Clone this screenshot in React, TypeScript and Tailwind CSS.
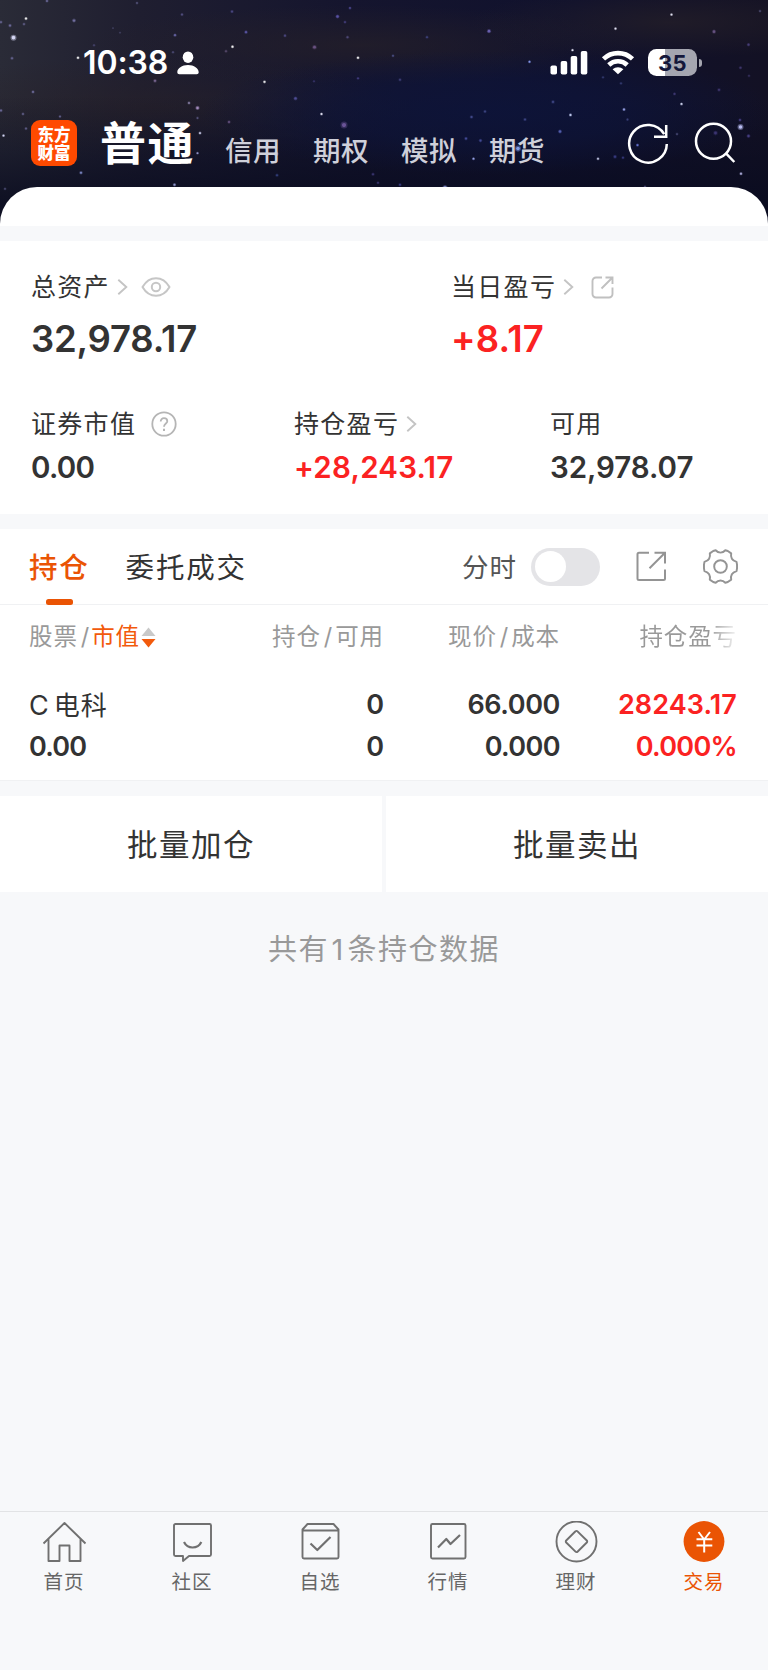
import React from "react";

const FONT = "font-['Inter','Noto_Sans_CJK_SC',sans-serif]";

// x, y, radius, opacity, colour
const STARS: [number, number, number, number, string][] = [
  [13.5, 37.5, 3, 1, "#dfe0ff"], [26, 18.5, 1.6, 1, "#fff"], [10, 25.5, 1.8, 0.6, "#8f8ccc"], [24, 24, 1.6, 0.5, "#8f8ccc"],
  [1, 22, 1.6, 0.6, "#8f8ccc"], [47, 1, 1.6, 0.6, "#8f8ccc"], [74, 20.5, 2, 0.7, "#8c88c4"], [12, 58, 1.8, 0.5, "#8f8ccc"],
  [78, 57.5, 1.6, 1, "#fff"], [33, 91.5, 1.7, 0.6, "#8f8ccc"], [23, 113.5, 1.6, 0.5, "#8f8ccc"], [1, 110, 1.7, 0.6, "#8f8ccc"],
  [3.5, 135, 1.5, 1, "#dfe0ff"], [26, 128, 1.6, 0.5, "#8f8ccc"], [81, 172, 1.8, 0.8, "#8f9be0"], [60, 116, 1.4, 0.6, "#8f8ccc"],
  [5, 188, 1.5, 0.4, "#8f8ccc"], [137, 3, 1.5, 0.4, "#8f8ccc"], [182, 14.5, 1.6, 0.6, "#6f6cac"], [175, 35, 1.7, 0.7, "#7f7ccc"],
  [113, 28, 1.2, 0.3, "#8f8ccc"], [120, 32.5, 1.2, 0.3, "#8f8ccc"], [94, 45, 1.5, 0.4, "#6f6cac"], [173, 52, 1.5, 0.5, "#6f6cac"],
  [155, 80.5, 1.9, 0.6, "#a588c0"], [189, 102.5, 1.6, 0.7, "#a9a0d0"], [197.5, 107.5, 2.1, 0.9, "#b49ad0"], [197.5, 117.5, 1.4, 0.5, "#8f8ccc"],
  [200, 132.5, 1.5, 1, "#dfe0ff"], [197.5, 152.5, 1.4, 0.8, "#aab0ef"], [229, 121.5, 1.7, 0.6, "#8f70b0"], [174.5, 184, 1.7, 0.9, "#a0a8e0"],
  [232.5, 46.5, 1.6, 1, "#fff"], [226, 51, 1.6, 0.5, "#806c9c"], [246, 32, 1.8, 0.7, "#6d68cc"], [232, 11.5, 1.8, 0.5, "#6d68bc"],
  [285, 35.5, 1.7, 0.5, "#6d68bc"], [264.5, 81.5, 1.6, 1, "#fff"], [295.5, 98, 2, 0.7, "#6360bb"], [321.5, 113.5, 1.5, 1, "#eef"],
  [344, 124.5, 3.5, 0.7, "#8b6cbc"], [314.5, 47, 2.3, 0.7, "#8466a0"], [337.5, 16.5, 2, 0.8, "#6860c0"], [345, 22, 1.6, 0.5, "#6860c0"],
  [350, 8, 1.6, 0.6, "#6860c0"], [347.5, 37, 1.7, 0.6, "#6860a0"], [358, 57.5, 1.6, 1, "#fff"], [358, 78, 1.5, 0.5, "#6860c0"],
  [314, 81, 1.3, 0.4, "#6860c0"], [277, 174.5, 1.8, 0.5, "#4b60b8"], [276, 153, 2.5, 0.8, "#8fb0ff"], [373, 173.5, 1.8, 0.4, "#6860c0"],
  [378, 182, 1.6, 0.4, "#6860c0"], [427, 37, 1.6, 0.6, "#4f56a8"], [489, 31, 2.1, 0.8, "#7c70cc"], [529.5, 61.5, 1.5, 0.9, "#8fa4ff"],
  [572.5, 50, 1.4, 1, "#eef"], [615.5, 28.5, 1.5, 1, "#eef"], [671.5, 14.5, 1.5, 1, "#eef"], [714, 31.5, 2.1, 0.6, "#8f70b0"],
  [748.5, 44.5, 1.8, 0.5, "#6f60b8"], [760, 11, 1.5, 0.4, "#8f8ccc"], [393, 55.5, 1.5, 0.5, "#6f78c8"], [400, 79.5, 1.7, 0.5, "#5f60a8"],
  [553, 101.5, 1.9, 0.5, "#5f68b8"], [485, 111, 1.7, 0.5, "#5f68b8"], [471.5, 116.5, 1.8, 0.6, "#5f68b8"], [525, 119, 1.8, 0.5, "#5f68b8"],
  [570.5, 114.5, 1.6, 1, "#cdd8ff"], [624, 109, 1.6, 0.9, "#a9b5ff"], [627.5, 119, 1.5, 0.4, "#6f78c8"], [681.5, 103.5, 1.5, 1, "#dfe4ff"],
  [560, 131, 2, 0.7, "#6a78d8"], [740.5, 126.5, 3, 1, "#c4c8ff"], [740, 119.5, 1.7, 0.5, "#6f60c8"], [748.5, 135.5, 2, 0.5, "#6f60c8"],
  [715.5, 132.5, 2.4, 0.4, "#6f60c8"], [677, 133.5, 1.5, 0.4, "#8f8ccc"], [637.5, 144.5, 1.6, 0.8, "#7f90ff"], [598, 158, 1.5, 1, "#cdd0ef"],
  [615, 156, 2, 0.6, "#4b50a8"], [623, 157, 1.6, 0.6, "#4b50a8"], [466, 138, 1.8, 0.6, "#5f68c8"], [480.5, 140, 1.8, 0.6, "#5f68c8"],
  [473.5, 158, 1.5, 0.9, "#a9b5ff"], [518, 148, 3, 0.9, "#8fb0ff"], [741, 173, 1.6, 1, "#b8b8e8"], [445, 187, 2.6, 0.9, "#a9b5ff"],
  [400, 184, 1.8, 0.6, "#4b50a8"], [645, 186, 1.5, 0.4, "#8f8ccc"], [740.5, 67.5, 1.8, 0.4, "#6f60b8"], [674.5, 93.5, 1.7, 0.4, "#6f60b8"],
  [719, 89.5, 1.9, 0.4, "#6f60b8"], [749, 75.5, 1.6, 0.3, "#6f60b8"], [621, 83, 1.6, 0.4, "#5f68b8"], [603, 77, 1.5, 0.4, "#5f68b8"],
];

function Sky() {
  return (
    <svg className="absolute inset-0 h-full w-full" viewBox="0 0 768 240" preserveAspectRatio="none" aria-hidden="true">
      <defs>
        <linearGradient id="base" x1="0" y1="0" x2="1" y2="0">
          <stop offset="0" stopColor="#2a2b37" />
          <stop offset="0.18" stopColor="#1f1e30" />
          <stop offset="0.45" stopColor="#15152e" />
          <stop offset="0.75" stopColor="#10112d" />
          <stop offset="1" stopColor="#131124" />
        </linearGradient>
        <linearGradient id="fade" x1="0" y1="0" x2="0" y2="1">
          <stop offset="0.4" stopColor="#090b1f" stopOpacity="0" />
          <stop offset="0.85" stopColor="#090b1f" stopOpacity="0.85" />
        </linearGradient>
        <radialGradient id="blue">
          <stop offset="0" stopColor="#0d143a" stopOpacity="0.85" />
          <stop offset="0.5" stopColor="#0d143a" stopOpacity="0.6" />
          <stop offset="1" stopColor="#0d143a" stopOpacity="0" />
        </radialGradient>
        <radialGradient id="warm">
          <stop offset="0" stopColor="#272128" stopOpacity="0.65" />
          <stop offset="1" stopColor="#272128" stopOpacity="0" />
        </radialGradient>
      </defs>
      <rect width="768" height="240" fill="url(#base)" />
      <ellipse cx="150" cy="108" rx="260" ry="52" fill="url(#warm)" />
      <ellipse cx="360" cy="45" rx="280" ry="40" fill="url(#warm)" />
      <ellipse cx="670" cy="22" rx="200" ry="36" fill="url(#warm)" />
      <rect width="768" height="240" fill="url(#fade)" />
      <ellipse cx="490" cy="112" rx="290" ry="62" fill="url(#blue)" />
      {STARS.map(([x, y, r, o, c], i) => (
        <g key={i} fill={c}>
          <circle cx={x} cy={y} r={r} opacity={o * 0.4} />
          <circle cx={x} cy={y} r={r * 0.6} opacity={o * 0.9} />
        </g>
      ))}
    </svg>
  );
}

function StatusBar() {
  return (
    <div className="flex h-[125px] items-center justify-between pr-[66px] pl-[83px]">
      <div className="flex items-center gap-[9px]">
        <span className="text-[32px] leading-[40px] font-semibold tracking-[-0.1px]">10:38</span>
        <svg width="22" height="24" viewBox="0 0 22 24" fill="currentColor">
          <ellipse cx="11" cy="6.2" rx="5.3" ry="5.8" />
          <path d="M0.3 21.2C0.3 17.6 5 14 11 14s10.7 3.6 10.7 7.2c0 1.2-.8 2-2 2H2.300c-1.200 0-2-.8-2-2z" />
        </svg>
      </div>
      <div className="flex items-center">
        <svg width="38" height="25" viewBox="0 0 38 25" fill="currentColor">
          <rect x="0.5" y="15.500" width="6.500" height="9" rx="1.800" />
          <rect x="10.700" y="11" width="6.500" height="13.500" rx="1.800" />
          <rect x="20.700" y="6" width="6.500" height="18.500" rx="1.800" />
          <rect x="30.800" y="1" width="6.500" height="23.500" rx="1.800" />
        </svg>
        <svg className="ml-[13px]" width="34" height="25" viewBox="0 0 34 25" fill="none" stroke="currentColor" strokeWidth="4.600">
          <path d="M2.500 8.900A21 21 0 0 1 31.500 8.900" />
          <path d="M7.800 15A13.200 13.200 0 0 1 26.200 15" />
          <path d="M17 24.300L11.600 19.300A7.800 7.800 0 0 1 22.400 19.300Z" fill="currentColor" stroke="none" />
        </svg>
        <div className="ml-[13px] flex items-center gap-[2px]">
          <div className="flex h-[27px] w-[49px] items-center justify-center rounded-[8.500px] bg-[linear-gradient(90deg,#fff_0_35%,#a5a6b0_35%)] text-[22px] leading-none font-bold tracking-[0.3px] text-[#14173a]">
            35
          </div>
          <div className="h-[8px] w-[3px] rounded-r-full bg-[#a5a6b0]" />
        </div>
      </div>
    </div>
  );
}

function Header() {
  return (
    <div className="flex h-[62px] items-start pl-[31px] text-white">
      <div className="mt-[-5px] flex h-[46px] w-[46px] flex-col items-center justify-center rounded-[9px] bg-[#ff4a00] pt-[2px] text-[16.500px] leading-[18.500px] font-black">
        <span>东方</span>
        <span>财富</span>
      </div>
      <div className="mt-[-7px] ml-[23px] text-[46px] leading-[50px] font-bold tracking-[1.500px]">普通</div>
      <nav className="mt-[1px] ml-[30px] flex gap-[32px] text-[27.500px] leading-[50px] font-medium tracking-[0.500px] text-[#cfd0da]">
        <span>信用</span>
        <span>期权</span>
        <span>模拟</span>
        <span>期货</span>
      </nav>
      <div className="ml-auto flex pr-[32px]">
        <svg className="mt-[-3px]" width="42" height="42" viewBox="0 0 42 42" fill="none" stroke="#fff" strokeWidth="2.500">
          <path d="M39.800 22A18.800 18.800 0 1 1 37.200 12.200" />
          <path d="M39.200 3V14.800H27" />
        </svg>
        <svg className="mt-[-3px] ml-[25px]" width="42" height="42" viewBox="0 0 42 42" fill="none" stroke="#fff" strokeWidth="2.500">
          <circle cx="19.500" cy="19.300" r="17.500" />
          <path d="M32 31.300L40.300 40" />
        </svg>
      </div>
    </div>
  );
}

function Chevron() {
  return (
    <svg className="ml-[7px] shrink-0" width="11" height="16" viewBox="0 0 11 16" fill="none" stroke="#c4c4c4" strokeWidth="1.900">
      <path d="M1.300 0.800L9.300 8L1.300 15.200" />
    </svg>
  );
}

const LABEL = "flex h-[40px] items-center text-[25px] tracking-[1.300px] whitespace-nowrap";

function Summary() {
  return (
    <section className="h-[273px] bg-white pt-[26px] text-[#333]">
      <div className="grid grid-cols-[420px_1fr] pl-[31px]">
        <div>
          <div className={LABEL}>
            <span className="pt-[2px]">总资产</span>
            <Chevron />
            <svg className="ml-[13px]" width="30" height="20" viewBox="0 0 30 20" fill="none" stroke="#c6c6c6" strokeWidth="2">
              <path d="M1.500 10C5 4 9.500 1.200 15 1.200S25 4 28.500 10C25 16 20.500 18.800 15 18.800S5 16 1.500 10Z" strokeLinejoin="round" />
              <circle cx="15" cy="10" r="4.200" />
            </svg>
          </div>
          <div className="mt-[12px] flex h-[40px] items-center text-[36.500px] font-semibold tracking-[-0.200px]">32,978.17</div>
        </div>
        <div>
          <div className={LABEL}>
            <span className="pt-[2px]">当日盈亏</span>
            <Chevron />
            <svg className="ml-[17px]" width="23" height="23" viewBox="0 0 23 23" fill="none" stroke="#c0c0c0" strokeWidth="1.900">
              <path d="M11 1.500H5A3.500 3.500 0 0 0 1.500 5V18A3.500 3.500 0 0 0 5 21.500H18A3.500 3.500 0 0 0 21.500 18V11.500" />
              <path d="M14.500 1.500H21.500V8M21 2L10.500 12.500" />
            </svg>
          </div>
          <div className="mt-[12px] flex h-[40px] items-center text-[36.500px] font-semibold tracking-[0.200px] text-[#fb2222]">+8.17</div>
        </div>
      </div>
      <div className="mt-[45px] grid grid-cols-[263px_256px_1fr] pl-[31px]">
        <div>
          <div className={LABEL}>
            <span className="pt-[2px]">证券市值</span>
            <svg className="ml-[15px]" width="26" height="26" viewBox="0 0 26 26" fill="none" stroke="#b5b5b5" strokeWidth="1.800">
              <circle cx="13" cy="13" r="11.700" />
              <path d="M9.700 10.600C9.700 8.400 11.100 7.100 13 7.100S16.300 8.400 16.300 10.200C16.300 12.500 13 12.700 13 15.800" />
              <path d="M13 17.800V20" strokeWidth="2" />
            </svg>
          </div>
          <div className="mt-[3px] flex h-[40px] items-center text-[29.500px] font-semibold tracking-[-0.700px]">0.00</div>
        </div>
        <div>
          <div className={LABEL}>
            <span className="pt-[2px]">持仓盈亏</span>
            <Chevron />
          </div>
          <div className="mt-[3px] flex h-[40px] items-center text-[29.500px] font-semibold tracking-[0.250px] text-[#fb2222]">+28,243.17</div>
        </div>
        <div>
          <div className={LABEL}>
            <span className="pt-[2px]">可用</span>
          </div>
          <div className="mt-[3px] flex h-[40px] items-center text-[29.500px] font-semibold tracking-[-0.050px]">32,978.07</div>
        </div>
      </div>
    </section>
  );
}

function Holdings() {
  return (
    <section className="h-[251px] bg-white text-[#333]">
      <div className="flex h-[76px] items-center border-b border-[#f0f1f3] pl-[29px] text-[28.500px] tracking-[1.800px]">
        <div className="relative flex h-full items-center pt-[3px] font-medium text-[#ea5404]">
          持仓
          <div className="absolute bottom-[-1px] left-[17px] h-[6px] w-[27px] rounded-[2.500px] bg-[#ea5404]" />
        </div>
        <div className="ml-[36px] pt-[3px]">委托成交</div>
        <div className="ml-auto pt-[2px] text-[26.500px] tracking-[1px] text-[#555]">分时</div>
        <div className="ml-[14px] flex h-[38px] w-[69px] items-center rounded-full bg-[#e4e4e7] pl-[4px]">
          <div className="h-[31px] w-[31px] rounded-full bg-white" />
        </div>
        <svg className="ml-[36px]" width="31" height="31" viewBox="0 0 31 31" fill="none" stroke="#949494" strokeWidth="2">
          <path d="M13 1.700H3A1.500 1.500 0 0 0 1.500 3.200V27.500A1.500 1.500 0 0 0 3 29H27.500A1.500 1.500 0 0 0 29 27.500V18.500" />
          <path d="M18.500 1.700H29V12.500M28.500 2.200L13.500 17.200" />
        </svg>
        <svg className="mr-[30px] ml-[36px]" width="35" height="35" viewBox="0 0 36 36" fill="none" stroke="#949494" strokeWidth="2" strokeLinejoin="round">
          <path d="M10.500 2L13 1.300C14.500 3 16 3.700 18 3.700S21.500 3 23 1.300L25.500 2L29 4.500C28.500 7 28.800 8.400 29.700 10S32.300 12.600 34.500 13.300L35 16V20L34.500 22.700C32.300 23.400 30.600 24.400 29.700 26S28.500 29 29 31.500L25.500 34L23 34.700C21.500 33 20 32.300 18 32.300S14.500 33 13 34.700L10.500 34L7 31.500C7.500 29 7.200 27.600 6.300 26S3.700 23.400 1.500 22.700L1 20V16L1.500 13.300C3.700 12.600 5.400 11.600 6.300 10S7.500 7 7 4.500Z" />
          <circle cx="18" cy="18" r="6.500" />
        </svg>
      </div>
      <div className="grid h-[64px] grid-cols-[185px_170px_176px_177px] items-center pl-[29px] text-[23.500px] tracking-[0.900px] text-[#999]">
        <div className="flex items-center">
          股票<span className="pr-[1px] pl-[3px]">/</span>
          <span className="text-[#f25a0c]">市值</span>
          <svg className="ml-px" width="15" height="21" viewBox="0 0 15 21">
            <path d="M7.500 0.500L14.500 9H0.500Z" fill="#c9c9c9" />
            <path d="M7.500 20.500L14.500 12H0.500Z" fill="#f25a0c" />
          </svg>
        </div>
        <div className="text-right">持仓<span className="pr-[2px] pl-[3px]">/</span>可用</div>
        <div className="text-right">现价<span className="pr-[2px] pl-[3px]">/</span>成本</div>
        <div className="bg-[linear-gradient(90deg,#999_0_84%,#f4f4f4_100%)] bg-clip-text text-right text-transparent">持仓盈亏</div>
      </div>
      <div className="grid grid-cols-[185px_170px_176px_177px] pt-[15px] pl-[29px] text-[27px] leading-[42px] font-semibold">
        <div className="pt-[1px] text-[26px] leading-[41px] font-normal tracking-[1px]">
          <span className="text-[27px]">C</span>
          <span className="ml-[4px]">电科</span>
        </div>
        <div className="text-right">0</div>
        <div className="text-right tracking-[-0.400px]">66.000</div>
        <div className="text-right tracking-[0.100px] text-[#fb2222]">28243.17</div>
        <div className="tracking-[-0.800px]">0.00</div>
        <div className="text-right">0</div>
        <div className="text-right tracking-[-0.600px]">0.000</div>
        <div className="text-right tracking-[-0.700px] text-[#fb2222]">0.000%</div>
      </div>
    </section>
  );
}

const TABS = [
  {
    label: "首页",
    icon: <path d="M1.500 22.500L22.500 2L43.500 22.500M6.500 18V40H17.500V24.500H27.500V40H38.500V18" />,
  },
  {
    label: "社区",
    icon: (
      <>
        <path d="M5.500 3H39.500A1.500 1.500 0 0 1 41 4.500V33.500A1.500 1.500 0 0 1 39.500 35H19L13 40V35H5.500A1.500 1.500 0 0 1 4 33.500V4.500A1.500 1.500 0 0 1 5.500 3Z" />
        <path d="M14 21C16 25 19 26.500 22.500 26.500S29.500 25 31.300 21" strokeWidth="2.200" />
      </>
    ),
  },
  {
    label: "自选",
    icon: (
      <>
        <path d="M4.500 8.500L9.500 3H35.500L40.500 8.500V36A1.500 1.500 0 0 1 39 37.500H6A1.500 1.500 0 0 1 4.500 36ZM5 9.500H40" />
        <path d="M12.500 22.500L19.300 29L32.500 16" strokeWidth="2.200" />
      </>
    ),
  },
  {
    label: "行情",
    icon: (
      <>
        <rect x="5" y="3" width="34.500" height="34.500" rx="1.500" />
        <path d="M12 26.500L20.300 18L24.500 23L34 14" strokeWidth="2.200" />
      </>
    ),
  },
  {
    label: "理财",
    icon: (
      <>
        <circle cx="22.500" cy="20.500" r="20" />
        <path d="M21.500 10.300A1.400 1.400 0 0 1 23.500 10.300L32.800 19.500A1.400 1.400 0 0 1 32.800 21.500L23.500 30.700A1.400 1.400 0 0 1 21.500 30.700L12.200 21.500A1.400 1.400 0 0 1 12.200 19.500Z" />
      </>
    ),
  },
  {
    label: "交易",
    active: true,
    icon: (
      <>
        <circle cx="22" cy="20.500" r="20.400" fill="#ea5404" stroke="none" />
        <path d="M16.500 11L22.200 18.500L28 11M22.200 18.500V31.500M14.500 18.300H30.300M14.500 24.500H30.300" stroke="#fff" strokeWidth="2" />
      </>
    ),
  },
];

export default function App() {
  return (
    <div className={`${FONT} flex h-[1670px] w-[768px] flex-col overflow-hidden bg-[#f7f8fa]`}>
      <header className="relative h-[241px] shrink-0 text-white">
        <Sky />
        <div className="relative">
          <StatusBar />
          <Header />
          <div className="flex h-[54px] flex-col overflow-hidden rounded-t-[37px] bg-white">
            <div className="mt-auto h-[15px] bg-[#f7f8fa]" />
          </div>
        </div>
      </header>
      <Summary />
      <div className="h-[15px] shrink-0" />
      <Holdings />
      <div className="h-[16px] shrink-0 border-t border-[#f0f1f3]" />
      <div className="grid h-[96px] shrink-0 grid-cols-2 gap-[4px] text-[30.500px] tracking-[1.500px] text-[#333]">
        <button className="bg-white pt-[2px]">批量加仓</button>
        <button className="bg-white pt-[2px]">批量卖出</button>
      </div>
      <p className="mt-[38px] text-center text-[29px] leading-[40px] tracking-[1.500px] text-[#999]">
        共有<span className="px-[2.500px]">1</span>条持仓数据
      </p>
      <nav className="mt-auto grid h-[159px] shrink-0 grid-cols-6 border-t border-[#e2e3e5] pt-[9px]">
        {TABS.map((t) => (
          <div
            key={t.label}
            className={`flex flex-col items-center text-[19.500px] leading-[28px] tracking-[1px] ${t.active ? "text-[#ea5404]" : "text-[#666]"}`}
          >
            <svg width="45" height="42" viewBox="0 0 45 42" fill="none" stroke="#707070" strokeWidth="1.900" strokeLinejoin="round">
              {t.icon}
            </svg>
            <span className="mt-[5px]">{t.label}</span>
          </div>
        ))}
      </nav>
    </div>
  );
}
